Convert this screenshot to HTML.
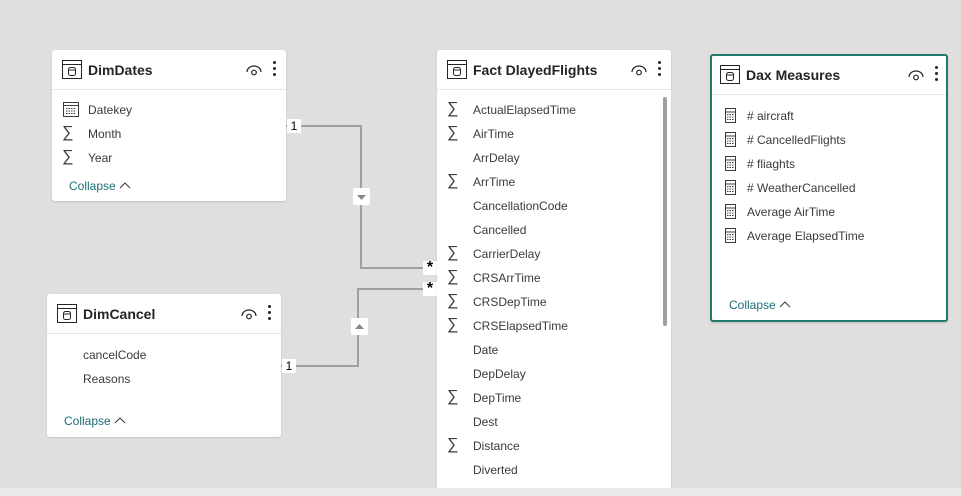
<!DOCTYPE html>
<html><head><meta charset="utf-8"><style>
*{margin:0;padding:0;box-sizing:border-box}
html,body{width:961px;height:496px;overflow:hidden}
body{background:#e1dfdd;position:relative;font-family:"Liberation Sans",sans-serif;color:#252423}
.card{position:absolute;background:#fff;border-radius:3px;box-shadow:0 1px 2px rgba(0,0,0,.12)}
.hd{position:absolute;left:0;right:0;top:0;height:40px;border-bottom:1px solid #e6e6e6}
.ti{position:absolute;left:36px;top:12px;font-size:14px;font-weight:bold;color:#252423}
.ic{position:absolute;left:10px;top:10px}
.eye{position:absolute;right:24px;top:14px}
.dots{position:absolute;right:10px;top:11px;width:3px}
.dots i{display:block;width:3px;height:3px;background:#252423;border-radius:50%;margin-bottom:3px}
.row{position:absolute;left:36px;font-size:12px;color:#3b3a39;white-space:nowrap}
.sg{position:absolute;left:10px;font-size:16px;color:#3b3a39;line-height:1;font-weight:normal}
.col{position:absolute;font-size:12px;color:#1a6f78;white-space:nowrap}
.col svg{vertical-align:1px;margin-left:3px}
.lbl{position:absolute;background:#fff;font-size:12px;width:14px;height:14px;line-height:14px;text-align:center;color:#000}
.ln{position:absolute;background:#a19f9d}
.arr{position:absolute;width:17px;height:17px;background:#fff;border-radius:2px}
</style></head><body>

<svg width="0" height="0" style="position:absolute"><defs>
<g id="tbl"><rect x="0.5" y="0.5" width="19" height="18" fill="none" stroke="#252423"/><line x1="0.5" y1="4.5" x2="19.5" y2="4.5" stroke="#252423"/><rect x="6.5" y="7.5" width="7" height="8" rx="2" fill="none" stroke="#252423"/><line x1="6.5" y1="10" x2="13.5" y2="10" stroke="#252423"/></g>
<g id="eye"><path d="M1 8 A7 6 0 0 1 15 8" fill="none" stroke="#252423" stroke-width="1.2"/><circle cx="8" cy="8.5" r="2.3" fill="none" stroke="#252423" stroke-width="1.2"/></g>
<g id="calc"><rect x="0.5" y="0.5" width="10" height="14" fill="none" stroke="#3b3a39"/><line x1="0.5" y1="4" x2="10.5" y2="4" stroke="#3b3a39"/><path d="M2 6.5h7M2 9h7M2 11.5h7" stroke="#3b3a39" stroke-dasharray="1.5 1"/></g>
<path id="chev" d="M1 6 L6 1 L11 6" fill="none" stroke="#3b3a39" stroke-width="1"/>
</defs></svg>

<div class="ln" style="left:286px;top:125px;width:76px;height:2px"></div>
<div class="ln" style="left:360px;top:125px;width:2px;height:144px"></div>
<div class="ln" style="left:360px;top:267px;width:64px;height:2px"></div>
<div class="ln" style="left:281px;top:365px;width:78px;height:2px"></div>
<div class="ln" style="left:357px;top:288px;width:2px;height:79px"></div>
<div class="ln" style="left:357px;top:288px;width:67px;height:2px"></div>
<div class="arr" style="left:353px;top:188px"><svg width="17" height="17"><path d="M4 7h9l-4.5 5z" fill="#8a8886"/></svg></div>
<div class="arr" style="left:351px;top:318px"><svg width="17" height="17"><path d="M4 11h9l-4.5-5z" fill="#8a8886"/></svg></div>
<div class="lbl" style="left:287px;top:119px">1</div>
<div class="lbl" style="left:282px;top:359px">1</div>
<div class="lbl" style="left:423px;top:261px;font-size:16px;font-weight:bold">*</div>
<div class="lbl" style="left:423px;top:282px;font-size:16px;font-weight:bold">*</div>

<div class="card" style="left:52px;top:50px;width:234px;height:151px">
<div class="hd"><svg class="ic" width="20" height="19"><use href="#tbl"/></svg><div class="ti">DimDates</div><svg class="eye" width="16" height="12"><use href="#eye"/></svg><div class="dots"><i></i><i></i><i></i></div></div>
<svg style="position:absolute;left:11px;top:52px" width="16" height="15"><rect x="0.5" y="0.5" width="15" height="14" fill="none" stroke="#3b3a39"/><line x1="0.5" y1="3.5" x2="15.5" y2="3.5" stroke="#3b3a39"/><path d="M3 6.5h10M3 9h10M3 11.5h10" stroke="#3b3a39" stroke-dasharray="1.5 1"/></svg>
<div class="row" style="top:53px">Datekey</div>
<div class="sg" style="top:75px">∑</div><div class="row" style="top:77px">Month</div>
<div class="sg" style="top:99px">∑</div><div class="row" style="top:101px">Year</div>
<div class="col" style="left:17px;top:129px">Collapse<svg width="12" height="7"><use href="#chev"/></svg></div>
</div>

<div class="card" style="left:47px;top:294px;width:234px;height:143px">
<div class="hd"><svg class="ic" width="20" height="19"><use href="#tbl"/></svg><div class="ti">DimCancel</div><svg class="eye" width="16" height="12"><use href="#eye"/></svg><div class="dots"><i></i><i></i><i></i></div></div>
<div class="row" style="top:54px">cancelCode</div>
<div class="row" style="top:78px">Reasons</div>
<div class="col" style="left:17px;top:120px">Collapse<svg width="12" height="7"><use href="#chev"/></svg></div>
</div>

<div class="card" style="left:437px;top:50px;width:234px;height:446px">
<div class="hd"><svg class="ic" width="20" height="19"><use href="#tbl"/></svg><div class="ti">Fact DlayedFlights</div><svg class="eye" width="16" height="12"><use href="#eye"/></svg><div class="dots"><i></i><i></i><i></i></div></div>
<div style="position:absolute;left:226px;top:47px;width:4px;height:229px;background:#a19f9d;border-radius:2px"></div>
<div class="sg" style="top:51px">∑</div><div class="row" style="top:53px">ActualElapsedTime</div>
<div class="sg" style="top:75px">∑</div><div class="row" style="top:77px">AirTime</div>
<div class="row" style="top:101px">ArrDelay</div>
<div class="sg" style="top:123px">∑</div><div class="row" style="top:125px">ArrTime</div>
<div class="row" style="top:149px">CancellationCode</div>
<div class="row" style="top:173px">Cancelled</div>
<div class="sg" style="top:195px">∑</div><div class="row" style="top:197px">CarrierDelay</div>
<div class="sg" style="top:219px">∑</div><div class="row" style="top:221px">CRSArrTime</div>
<div class="sg" style="top:243px">∑</div><div class="row" style="top:245px">CRSDepTime</div>
<div class="sg" style="top:267px">∑</div><div class="row" style="top:269px">CRSElapsedTime</div>
<div class="row" style="top:293px">Date</div>
<div class="row" style="top:317px">DepDelay</div>
<div class="sg" style="top:339px">∑</div><div class="row" style="top:341px">DepTime</div>
<div class="row" style="top:365px">Dest</div>
<div class="sg" style="top:387px">∑</div><div class="row" style="top:389px">Distance</div>
<div class="row" style="top:413px">Diverted</div>
</div>
<div style="position:absolute;left:0;right:0;top:488px;height:8px;background:#eaeaea"></div>

<div class="card" style="left:710px;top:54px;width:238px;height:268px;border:2px solid #217a6b">
<div class="hd" style="height:39px"><svg class="ic" width="20" height="19" style="left:8px;top:9px"><use href="#tbl"/></svg><div class="ti" style="left:34px;top:11px">Dax Measures</div><svg class="eye" width="16" height="12" style="right:22px;top:13px"><use href="#eye"/></svg><div class="dots" style="right:8px;top:10px"><i></i><i></i><i></i></div></div>
<svg style="position:absolute;left:13px;top:52px" width="11" height="15"><use href="#calc"/></svg><div class="row" style="left:35px;top:53px"># aircraft</div>
<svg style="position:absolute;left:13px;top:76px" width="11" height="15"><use href="#calc"/></svg><div class="row" style="left:35px;top:77px"># CancelledFlights</div>
<svg style="position:absolute;left:13px;top:100px" width="11" height="15"><use href="#calc"/></svg><div class="row" style="left:35px;top:101px"># fliaghts</div>
<svg style="position:absolute;left:13px;top:124px" width="11" height="15"><use href="#calc"/></svg><div class="row" style="left:35px;top:125px"># WeatherCancelled</div>
<svg style="position:absolute;left:13px;top:148px" width="11" height="15"><use href="#calc"/></svg><div class="row" style="left:35px;top:149px">Average AirTime</div>
<svg style="position:absolute;left:13px;top:172px" width="11" height="15"><use href="#calc"/></svg><div class="row" style="left:35px;top:173px">Average ElapsedTime</div>
<div class="col" style="left:17px;top:242px">Collapse<svg width="12" height="7"><use href="#chev"/></svg></div>
</div>
</body></html>
